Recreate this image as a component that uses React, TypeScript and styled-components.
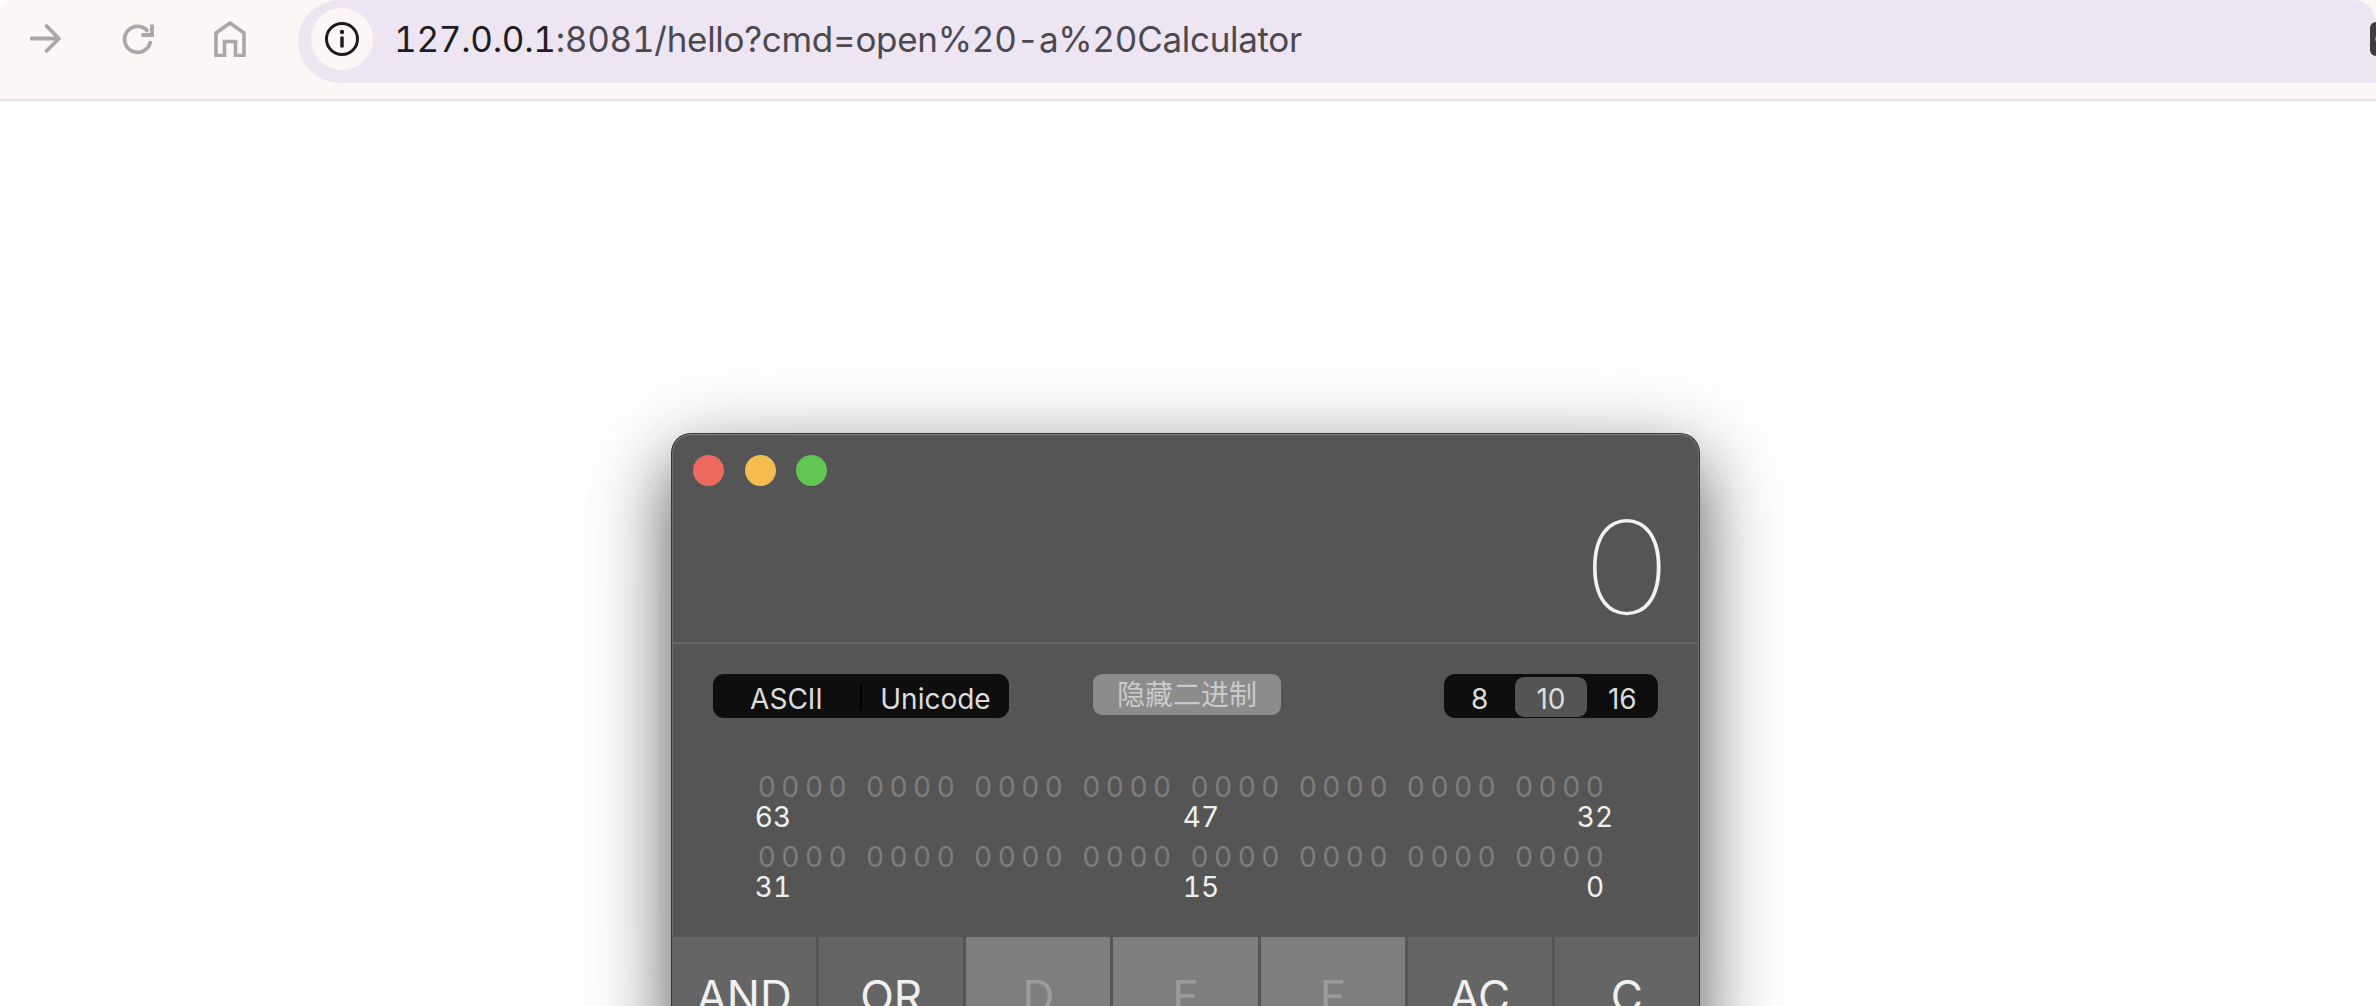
import styled, { createGlobalStyle } from 'styled-components';

const UI_FONT = 'Inter, "Noto Sans CJK SC", "Liberation Sans", sans-serif';

const GlobalStyle = createGlobalStyle`
  html,
  body {
    margin: 0;
    height: 1006px;
    overflow: hidden;
    background: #fff;
  }
`;

const KEYS = [
  { label: 'AND', disabled: false },
  { label: 'OR', disabled: false },
  { label: 'D', disabled: true },
  { label: 'E', disabled: true },
  { label: 'F', disabled: true },
  { label: 'AC', disabled: false },
  { label: 'C', disabled: false },
];

const BitRow = () => (
  <Bits>
    {Array.from({ length: 8 }).map((_, group) => (
      <BitGroup key={group}>
        {Array.from({ length: 4 }).map((_, bit) => (
          <Bit key={bit}>0</Bit>
        ))}
      </BitGroup>
    ))}
  </Bits>
);

export default function App() {
  return (
    <Page>
      <GlobalStyle />
      <Toolbar>
        <Nav>
          <svg width="32" height="32" viewBox="0 0 32 32" fill="none" stroke="#a9a7aa" strokeWidth="3.8">
            <path d="M1 15.5H29M16.5 3L29 15.5L16.5 28" strokeLinecap="round" strokeLinejoin="round" />
          </svg>
          <svg width="32" height="32" viewBox="0 0 32 32" fill="none" stroke="#a9a7aa" strokeWidth="3.8">
            <path d="M26 8.5A13 13 0 1 0 28.5 18" />
            <path d="M30 1.5V12H19.5" />
          </svg>
          <svg width="32" height="36" viewBox="0 0 32 36" fill="none" stroke="#a9a7aa" strokeWidth="3.6">
            <path d="M2 34.5V12L16 2L30 12V34.5H21.5V20.5H10.5V34.5Z" />
          </svg>
        </Nav>
        <AddressBar>
          <InfoBubble>
            <svg width="36" height="36" viewBox="0 0 36 36" fill="none">
              <circle cx="18" cy="18" r="15.5" stroke="#1c1a1d" strokeWidth="3" />
              <rect x="16.3" y="15.5" width="3.4" height="11" fill="#1c1a1d" />
              <circle cx="18" cy="11" r="2.2" fill="#1c1a1d" />
            </svg>
          </InfoBubble>
          <Url>
            <Host>127.0.0.1</Host>:8081/hello?cmd=open%20-a%20Calculator
          </Url>
          <ExtensionIcon />
        </AddressBar>
      </Toolbar>

      <Stage>
        <CalculatorWindow>
          <Header>
            <TrafficLights>
              <Light $color="#ee6a5f" />
              <Light $color="#f5bd4f" />
              <Light $color="#61c554" />
            </TrafficLights>
            <Readout>0</Readout>
          </Header>

          <Controls>
            <Segmented $width={296}>
              <Segment>ASCII</Segment>
              <SegmentDivider />
              <Segment>Unicode</Segment>
            </Segmented>
            <HideButton>隐藏二进制</HideButton>
            <Radix>
              <Segmented $width={214}>
                <Segment>8</Segment>
                <Segment $active>10</Segment>
                <Segment>16</Segment>
              </Segmented>
            </Radix>
          </Controls>

          <BitPanel>
            <BitRow />
            <BitLabels>
              <BitLabel>63</BitLabel>
              <BitLabel>47</BitLabel>
              <BitLabel>32</BitLabel>
            </BitLabels>
            <SecondRow>
              <BitRow />
            </SecondRow>
            <BitLabels>
              <BitLabel>31</BitLabel>
              <BitLabel>15</BitLabel>
              <BitLabel>0</BitLabel>
            </BitLabels>
          </BitPanel>

          <Keypad>
            {KEYS.map((key) => (
              <Key key={key.label} $disabled={key.disabled}>
                {key.label}
              </Key>
            ))}
          </Keypad>
        </CalculatorWindow>
      </Stage>
    </Page>
  );
}

const Page = styled.div`
  width: 2376px;
  height: 1006px;
  overflow: hidden;
  font-family: ${UI_FONT};
`;

const Toolbar = styled.header`
  display: flex;
  height: 99px;
  background: #fdf6f6;
  border-bottom: 2px solid #eadfe6;
  border-top-left-radius: 14px;
`;

const Nav = styled.nav`
  display: flex;
  align-items: center;
  gap: 60px;
  height: 78px;
  padding-left: 30px;
  flex-shrink: 0;
`;

const AddressBar = styled.div`
  display: flex;
  align-items: center;
  flex: 1;
  height: 83px;
  margin-left: 52px;
  padding: 0 0 5px 13px;
  box-sizing: border-box;
  overflow: hidden;
  background: #ede5f1;
  border-radius: 42px 23px 0 42px;
`;

const InfoBubble = styled.div`
  display: flex;
  align-items: center;
  justify-content: center;
  width: 62px;
  height: 62px;
  border-radius: 50%;
  background: #fdf6f6;
  flex-shrink: 0;
`;

const Url = styled.div`
  margin-left: 21px;
  font-size: 35px;
  font-variant-numeric: tabular-nums;
  letter-spacing: -0.3px;
  color: #4c494e;
  white-space: nowrap;
`;

const Host = styled.span`
  color: #1f1c20;
`;

const ExtensionIcon = styled.div`
  width: 20px;
  height: 34px;
  margin-left: auto;
  margin-right: -14px;
  border-radius: 6px;
  background: radial-gradient(circle at 12px 17px, #efe9f0 0 6px, #3e3a3e 7px);
  flex-shrink: 0;
`;

const Stage = styled.main`
  padding: 332px 0 0 671px;
`;

const CalculatorWindow = styled.section`
  width: 1029px;
  box-sizing: border-box;
  background: #555;
  border: 1px solid #333;
  border-bottom: 0;
  border-radius: 20px 20px 0 0;
  box-shadow:
    inset 0 1px 0 #8a8a8a,
    inset 1px 0 0 #6e6e6e,
    inset -1px 0 0 #6e6e6e,
    0 30px 70px rgba(0, 0, 0, 0.62),
    0 10px 130px rgba(0, 0, 0, 0.1);
`;

const Header = styled.div`
  height: 210px;
  box-sizing: border-box;
  padding: 21px 34px 0 21px;
  border-bottom: 2px solid #666;
`;

const TrafficLights = styled.div`
  display: flex;
  gap: 20.5px;
`;

const Light = styled.span<{ $color: string }>`
  width: 31px;
  height: 31px;
  border-radius: 50%;
  background: ${(props) => props.$color};
`;

const Readout = styled.div`
  margin-top: 12px;
  font-family: Lato, sans-serif;
  font-size: 132px;
  font-weight: 100;
  line-height: 130px;
  text-align: right;
  color: #f2f2f2;
  -webkit-text-stroke: 2px #f2f2f2;
`;

const Controls = styled.div`
  display: flex;
  align-items: flex-start;
  padding: 30px 41px 0 41px;
`;

const Segmented = styled.div<{ $width: number }>`
  display: flex;
  width: ${(props) => props.$width}px;
  height: 44px;
  background: #0e0e0e;
  border-radius: 11px;
`;

const Segment = styled.div<{ $active?: boolean }>`
  flex: 1;
  display: flex;
  align-items: center;
  justify-content: center;
  margin: 3px 0 1px;
  padding-top: 3px;
  box-sizing: border-box;
  font-size: 28px;
  color: #dcdcdc;
  border-radius: 9px;
  background: ${(props) => (props.$active ? '#545454' : 'transparent')};
`;

const SegmentDivider = styled.span`
  width: 2px;
  margin: 10px 0 8px;
  background: #000;
`;

const HideButton = styled.div`
  display: flex;
  align-items: center;
  justify-content: center;
  width: 188px;
  height: 41px;
  margin-left: 84px;
  font-size: 28px;
  line-height: 1;
  color: #cacaca;
  background: #8c8c8c;
  border-radius: 9px;
`;

const Radix = styled.div`
  margin-left: auto;
`;

const BitPanel = styled.div`
  height: 219px;
  box-sizing: border-box;
  padding: 54px 0 0 83px;
`;

const Bits = styled.div`
  display: flex;
  height: 30px;
  align-items: center;
`;

const BitGroup = styled.div`
  display: flex;
  width: 108.2px;
  flex-shrink: 0;
`;

const Bit = styled.span`
  width: 23.6px;
  text-align: center;
  font-size: 28px;
  font-weight: 400;
  line-height: 30px;
  color: #7d7d7d;
`;

const SecondRow = styled.div`
  margin-top: 10px;
`;

const BitLabels = styled.div`
  display: grid;
  grid-template-columns: 428px 394px 60px;
  margin-left: -12px;
`;

const BitLabel = styled.span`
  width: 60px;
  height: 30px;
  text-align: center;
  font-size: 28px;
  font-variant-numeric: tabular-nums;
  line-height: 30px;
  color: #f0f0f0;
`;

const Keypad = styled.div`
  display: flex;
`;

const Key = styled.div<{ $disabled: boolean }>`
  flex: 1;
  display: flex;
  align-items: center;
  justify-content: center;
  height: 118px;
  font-size: 44px;
  font-weight: 400;
  color: ${(props) => (props.$disabled ? '#9c9c9c' : '#f0f0f0')};
  background: ${(props) => (props.$disabled ? '#7e7e7e' : '#656565')};
  border-right: 3px solid #555;

  &:last-child {
    border-right: 0;
  }
`;
